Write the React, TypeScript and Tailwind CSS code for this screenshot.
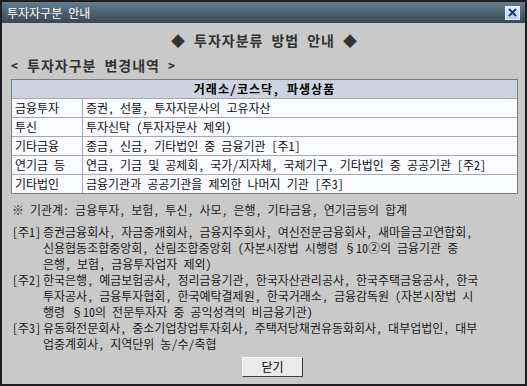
import React from "react";

const FONT = { fontFamily: '"Noto Sans Mono CJK KR", "Noto Sans CJK KR", "Noto Sans", sans-serif' };

const ROWS: { type: string; desc: string }[] = [
  { type: "금융투자", desc: "증권, 선물, 투자자문사의 고유자산" },
  { type: "투신", desc: "투자신탁 (투자자문사 제외)" },
  { type: "기타금융", desc: "종금, 신금, 기타법인 중 금융기관 [주1]" },
  { type: "연기금 등", desc: "연금, 기금 및 공제회, 국가/지자체, 국제기구, 기타법인 중 공공기관 [주2]" },
  { type: "기타법인", desc: "금융기관과 공공기관을 제외한 나머지 기관 [주3]" },
];

const NOTES: { label: string; lines: string[] }[] = [
  {
    label: "[주1]",
    lines: [
      "증권금융회사, 자금중개회사, 금융지주회사, 여신전문금융회사, 새마을금고연합회,",
      "신용협동조합중앙회, 산림조합중앙회 (자본시장법 시행령 §10②의 금융기관 중",
      "은행, 보험, 금융투자업자 제외)",
    ],
  },
  {
    label: "[주2]",
    lines: [
      "한국은행, 예금보험공사, 정리금융기관, 한국자산관리공사, 한국주택금융공사, 한국",
      "투자공사, 금융투자협회, 한국예탁결제원, 한국거래소, 금융감독원 (자본시장법 시",
      "행령 §10의 전문투자자 중 공익성격의 비금융기관)",
    ],
  },
  {
    label: "[주3]",
    lines: [
      "유동화전문회사, 중소기업창업투자회사, 주택저당채권유동화회사, 대부업법인, 대부",
      "업중계회사, 지역단위 농/수/축협",
    ],
  },
];

export default function App() {
  return (
    <div
      className="w-[527px] h-[386px] flex flex-col border-2 border-[#1e1e1e] bg-[#c9c9c9] text-[12px] text-[#111]"
      style={FONT}
    >
      {/* Title bar */}
      <div className="h-[21px] flex items-center justify-between pl-[5px] pr-[5px] bg-gradient-to-b from-[#667c8e] to-[#3a4755]">
        <span className="text-white text-[12px] leading-[14px]">투자자구분 안내</span>
        <button className="w-[15px] h-[14px] flex items-center justify-center border border-[#e8f0fa] bg-gradient-to-b from-[#e6eefa] to-[#b9cde9]">
          <svg width="9" height="9" viewBox="0 0 9 9">
            <path d="M1 1L8 8M8 1L1 8" stroke="#1d3566" strokeWidth="1.8" />
          </svg>
        </button>
      </div>

      {/* Body */}
      <div className="flex-1 flex flex-col pl-[9px] pr-[7px]">
        <div className="mt-[9px] h-[16px] leading-[16px] text-center text-[14px] font-bold tracking-[1px] text-[#333]">
          ◆ 투자자분류 방법 안내 ◆
        </div>
        <div className="mt-[9px] h-[16px] leading-[16px] text-[14px] font-bold tracking-[1px] text-[#333]">
          &lt; 투자자구분 변경내역 &gt;
        </div>

        {/* Table */}
        <div className="mt-[6px] border border-[#7e7e7e] bg-[#fafbfe]">
          <div className="h-[18px] leading-[18px] text-center font-bold tracking-[1px] bg-[#cdd3e0] text-black">
            거래소/코스닥, 파생상품
          </div>
          {ROWS.map((row) => (
            <div key={row.type} className="flex h-[19px] leading-[18px] border-t border-[#a9a9a9]">
              <div className="w-[70px] pl-[3px] whitespace-nowrap">{row.type}</div>
              <div className="flex-1 pl-[3px] border-l border-[#a9a9a9] whitespace-nowrap">{row.desc}</div>
            </div>
          ))}
        </div>

        {/* Notes */}
        <div className="mt-[8px] pl-[1px] h-[16px] leading-[16px] text-[#222] whitespace-nowrap">
          ※ 기관계: 금융투자, 보험, 투신, 사모, 은행, 기타금융, 연기금등의 합계
        </div>
        <div className="mt-[6px] pl-[1px] flex flex-col text-[#1a1a1a]">
          {NOTES.map((note) => (
            <div key={note.label} className="flex leading-[16px]">
              <span className="w-[31px] shrink-0">{note.label}</span>
              <div className="flex flex-col whitespace-nowrap">
                {note.lines.map((line) => (
                  <span key={line}>{line}</span>
                ))}
              </div>
            </div>
          ))}
        </div>

        {/* Close button */}
        <div className="mt-[5px] pl-[231px]">
          <button className="w-[61px] h-[20px] flex items-center justify-center bg-[#ebebeb] border border-t-white border-l-white border-r-[#3c3c3c] border-b-[#3c3c3c] text-black text-[12px]">
            닫기
          </button>
        </div>
      </div>
    </div>
  );
}
